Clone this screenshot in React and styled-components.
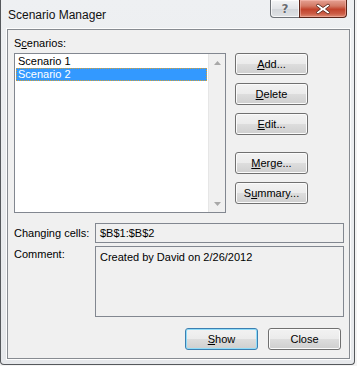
import React from 'react';
import styled, { createGlobalStyle } from 'styled-components';

const GlobalStyle = createGlobalStyle`
  html, body {
    margin: 0;
    padding: 0;
    background: #f3f3f3;
  }
  body {
    font-family: "Liberation Sans", Arial, sans-serif;
    font-size: 11px;
    color: #000;
  }
`;

const scenarios = ['Scenario 1', 'Scenario 2'];

const Window = styled.div`
  box-sizing: border-box;
  width: 355px;
  height: 365px;
  border: 1px solid #55585c;
  border-top: none;
  border-radius: 0 0 4px 4px;
  background: linear-gradient(#eef0f2, #e6e8eb);
  display: flex;
  flex-direction: column;
  padding: 0 4px 5px 6px;
`;

const TitleBar = styled.div`
  height: 29px;
  display: flex;
  align-items: flex-start;
  justify-content: space-between;
  flex-shrink: 0;
`;

const Title = styled.div`
  font-size: 12px;
  line-height: 15px;
  padding: 8px 0 0 1px;
  color: #111;
`;

const TitleButtons = styled.div`
  display: flex;
  margin-right: 3px;
`;

const HelpButton = styled.div`
  box-sizing: border-box;
  width: 29px;
  height: 18px;
  border: 1px solid #6e7277;
  border-top: none;
  border-right: none;
  border-radius: 0 0 0 4px;
  background: linear-gradient(#f4f5f6 0%, #e2e4e7 50%, #d2d5d9 51%, #dfe2e5 100%);
  box-shadow: inset 0 0 0 1px rgba(255, 255, 255, 0.7);
  display: flex;
  align-items: center;
  justify-content: center;
  font-family: "DejaVu Sans", sans-serif;
  font-weight: bold;
  font-size: 12px;
  color: #6a6d71;
  text-shadow: 0 0 1px #fff, 0 0 1px #fff;
`;

const CloseButton = styled.div`
  box-sizing: border-box;
  width: 48px;
  height: 18px;
  border: 1px solid #5b2519;
  border-top: none;
  border-radius: 0 0 4px 0;
  background: linear-gradient(#e5a193 0%, #d37a66 35%, #c2432c 55%, #cc5c45 80%, #dd8c74 100%);
  box-shadow: inset 0 0 0 1px rgba(255, 200, 190, 0.45);
  display: flex;
  align-items: center;
  justify-content: center;
`;

const Client = styled.div`
  flex: 1;
  box-sizing: border-box;
  border: 1px solid #878b91;
  box-shadow: 0 0 0 1px rgba(255, 255, 255, 0.85);
  background: #f0f0f0;
  padding: 7px 5px 0 6px;
  display: flex;
  flex-direction: column;
`;

const TopGrid = styled.div`
  display: grid;
  grid-template-columns: 212px 73px;
  grid-template-rows: 13px auto;
  column-gap: 9px;
  row-gap: 3px;
`;

const Label = styled.div`
  line-height: 13px;
  white-space: nowrap;
  padding-top: ${p => p.$offset || 0}px;
`;

const Key = styled.span`
  text-decoration: underline;
  text-underline-offset: 1px;
`;

const ListBox = styled.div`
  grid-row: 2;
  grid-column: 1;
  box-sizing: border-box;
  height: 160px;
  border: 1px solid #828790;
  background: #fff;
  display: flex;
`;

const Items = styled.div`
  flex: 1;
  padding: 1px 1px 1px 1px;
`;

const Item = styled.div`
  box-sizing: border-box;
  height: 13px;
  line-height: 11px;
  padding-left: 1px;
  white-space: nowrap;
  border: 1px dotted ${p => (p.$selected ? '#d9a030' : 'transparent')};
  background: ${p => (p.$selected ? '#3399ff' : 'transparent')};
  color: ${p => (p.$selected ? '#fff' : '#000')};
`;

const ScrollBar = styled.div`
  width: 17px;
  box-sizing: border-box;
  background: #f0f0f0;
  border-left: 1px solid #e6e6e6;
  display: flex;
  flex-direction: column;
  justify-content: space-between;
`;

const Arrow = styled.div`
  height: 17px;
  display: flex;
  align-items: center;
  justify-content: center;
`;

const ButtonColumn = styled.div`
  grid-row: 2;
  grid-column: 2;
  display: flex;
  flex-direction: column;
  gap: 8px;
`;

const Button = styled.button`
  box-sizing: border-box;
  width: 73px;
  height: 22px;
  margin: 0;
  margin-top: ${p => (p.$spaced ? 9 : 0)}px;
  padding: 0;
  font-family: "Liberation Sans", Arial, sans-serif;
  font-size: 11px;
  color: #000;
  border: 1px solid ${p => (p.$default ? '#3c7fb1' : '#707070')};
  border-radius: 3px;
  background: linear-gradient(#f2f2f2 0%, #ebebeb 50%, #dddddd 51%, #cfcfcf 100%);
  box-shadow: inset 0 0 0 1px ${p => (p.$default ? '#8fdcf9' : '#fbfbfb')};
`;

const Fields = styled.div`
  display: grid;
  grid-template-columns: 81px 249px;
  grid-template-rows: 20px 71px;
  row-gap: 3px;
  margin-top: 10px;
`;

const Field = styled.div`
  box-sizing: border-box;
  border: 1px solid #828790;
  background: #f0f0f0;
  padding: ${p => (p.$multi ? '4px 4px' : '0 4px')};
  line-height: ${p => (p.$multi ? '13px' : '18px')};
  white-space: nowrap;
`;

const Footer = styled.div`
  display: flex;
  justify-content: flex-end;
  gap: 10px;
  margin-top: 11px;
  padding-right: 3px;
`;

function App() {
  return (
    <>
      <GlobalStyle />
      <Window>
        <TitleBar>
          <Title>Scenario Manager</Title>
          <TitleButtons>
            <HelpButton>?</HelpButton>
            <CloseButton>
              <svg width="16" height="12" viewBox="0 0 16 12">
                <path
                  d="M3 1 L8 4.5 L13 1 L15 2.5 L10.5 6 L15 9.5 L13 11 L8 7.5 L3 11 L1 9.5 L5.5 6 L1 2.5 Z"
                  fill="#fff"
                  stroke="#5a2a20"
                  strokeWidth="0.9"
                  strokeLinejoin="round"
                />
              </svg>
            </CloseButton>
          </TitleButtons>
        </TitleBar>
        <Client>
          <TopGrid>
            <Label>S<Key>c</Key>enarios:</Label>
            <ListBox>
              <Items>
                {scenarios.map((name, i) => (
                  <Item key={name} $selected={i === 1}>{name}</Item>
                ))}
              </Items>
              <ScrollBar>
                <Arrow>
                  <svg width="7" height="4" viewBox="0 0 7 4"><path d="M3.5 0 L7 4 L0 4 Z" fill="#a8a8a8" /></svg>
                </Arrow>
                <Arrow>
                  <svg width="7" height="4" viewBox="0 0 7 4"><path d="M0 0 L7 0 L3.5 4 Z" fill="#a8a8a8" /></svg>
                </Arrow>
              </ScrollBar>
            </ListBox>
            <ButtonColumn>
              <Button><Key>A</Key>dd...</Button>
              <Button><Key>D</Key>elete</Button>
              <Button><Key>E</Key>dit...</Button>
              <Button $spaced><Key>M</Key>erge...</Button>
              <Button>S<Key>u</Key>mmary...</Button>
            </ButtonColumn>
          </TopGrid>
          <Fields>
            <Label $offset={4}>Changing cells:</Label>
            <Field>$B$1:$B$2</Field>
            <Label $offset={2}>Comment:</Label>
            <Field $multi>Created by David on 2/26/2012</Field>
          </Fields>
          <Footer>
            <Button $default><Key>S</Key>how</Button>
            <Button>Close</Button>
          </Footer>
        </Client>
      </Window>
    </>
  );
}

export default App;
